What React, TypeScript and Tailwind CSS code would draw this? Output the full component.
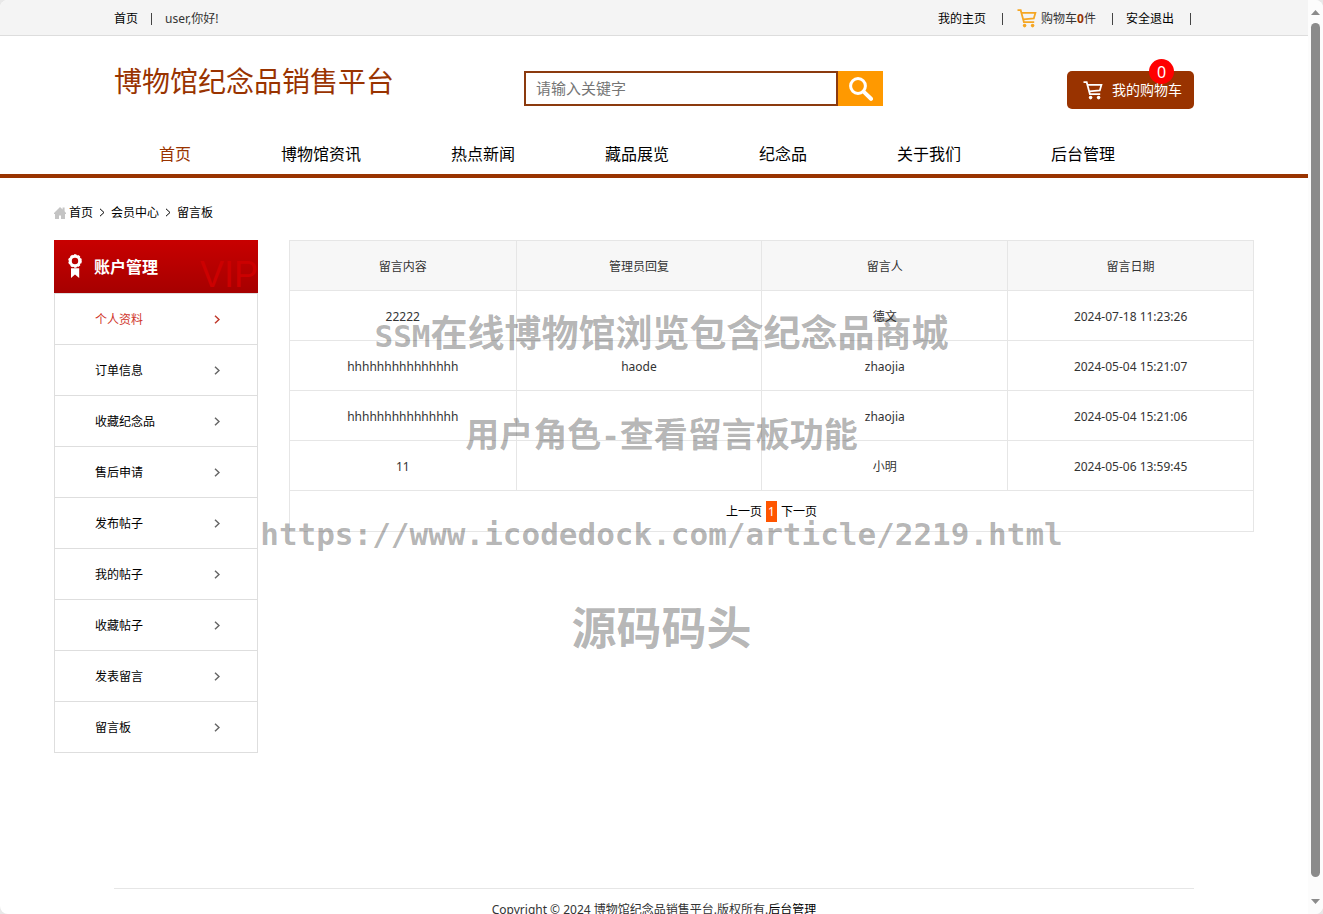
import { useState } from 'react';

const navItems = ['首页', '博物馆资讯', '热点新闻', '藏品展览', '纪念品', '关于我们', '后台管理'];

const sideItems = [
  '个人资料',
  '订单信息',
  '收藏纪念品',
  '售后申请',
  '发布帖子',
  '我的帖子',
  '收藏帖子',
  '发表留言',
  '留言板',
];

const messages = [
  { content: '22222', reply: '', user: '德文', date: '2024-07-18 11:23:26' },
  { content: 'hhhhhhhhhhhhhhh', reply: 'haode', user: 'zhaojia', date: '2024-05-04 15:21:07' },
  { content: 'hhhhhhhhhhhhhhh', reply: '', user: 'zhaojia', date: '2024-05-04 15:21:06' },
  { content: '11', reply: '', user: '小明', date: '2024-05-06 13:59:45' },
];

function CartIcon({ className }: { className?: string }) {
  return (
    <svg viewBox="0 0 20 19" fill="none" stroke="currentColor" strokeWidth="1.8" className={className} aria-hidden="true">
      <path d="M0.5 1.2h3.2l3.2 12h10.3" />
      <path d="M4.4 3.9h14l-1.6 5.6-10.6.8" />
      <circle cx="7.6" cy="16.6" r="1.8" fill="currentColor" stroke="none" />
      <circle cx="15.6" cy="16.6" r="1.8" fill="currentColor" stroke="none" />
    </svg>
  );
}

function Chevron({ className }: { className?: string }) {
  return (
    <svg viewBox="0 0 6 9" fill="none" stroke="currentColor" className={className} aria-hidden="true">
      <path d="M1 0.8l4 3.7-4 3.7" />
    </svg>
  );
}

function TopBar() {
  return (
    <div className="border-b border-[#ddd] bg-[#f4f4f4]">
      <div className="mx-auto flex h-[35px] max-w-[1080px] items-center justify-between pt-[2px]">
        <div className="flex items-center">
          <a href="#" className="text-black">首页</a>
          <span className="mx-[13px] h-3 w-px bg-[#444]" />
          <span>user,你好!</span>
        </div>
        <div className="flex items-center">
          <a href="#" className="text-black">我的主页</a>
          <span className="ml-4 mr-[14px] h-3 w-px bg-[#444]" />
          <a href="#" className="flex items-center">
            <CartIcon className="mr-1 h-[19px] w-5 text-[#f5a623]" />
            <span>购物车<b className="text-[#993300]">0</b>件</span>
          </a>
          <span className="ml-4 mr-[13px] h-3 w-px bg-[#444]" />
          <a href="#" className="text-black">安全退出</a>
          <span className="ml-4 mr-[3px] h-3 w-px bg-[#444]" />
        </div>
      </div>
    </div>
  );
}

function Header() {
  const [keyword, setKeyword] = useState('');

  return (
    <header className="border-b-4 border-[#993300]">
      <div className="mx-auto flex h-[98px] max-w-[1080px] items-start justify-between pt-[35px]">
        <h1 className="w-[410px] text-[28px] leading-5 text-[#993300]">博物馆纪念品销售平台</h1>
        <form className="mr-auto flex h-[35px]" onSubmit={(e) => e.preventDefault()}>
          <input
            type="text"
            aria-label="请输入关键字"
            placeholder="请输入关键字"
            value={keyword}
            onChange={(e) => setKeyword(e.target.value)}
            className="w-[314px] border-2 border-[#8b3a0e] bg-white px-[10px] pb-[2px] text-[15px] outline-none placeholder:text-[#757575]"
          />
          <button type="submit" aria-label="搜索" className="flex w-[45px] items-center justify-center bg-[#ff9900]">
            <svg viewBox="0 0 24 24" fill="none" stroke="#fff" className="size-6" aria-hidden="true">
              <circle cx="9" cy="9" r="7.4" strokeWidth="3" />
              <path d="M14.6 14.6l7.4 7.2" strokeWidth="4" strokeLinecap="round" />
            </svg>
          </button>
        </form>
        <a href="#" className="relative flex h-[38px] w-[127px] items-center rounded-[5px] bg-[#993300] pl-4 text-sm text-white">
          <CartIcon className="mr-[9px] h-[19px] w-5" />
          我的购物车
          <span className="absolute -top-3 right-5 flex size-[25px] items-center justify-center rounded-full bg-[#ff0000] text-base">
            0
          </span>
        </a>
      </div>
      <nav className="mx-auto flex h-10 max-w-[1080px] text-base">
        {navItems.map((item, i) => (
          <a key={item} href="#" className={`px-[45px] leading-[40px] ${i === 0 ? 'text-[#993300]' : 'text-black'}`}>
            {item}
          </a>
        ))}
      </nav>
    </header>
  );
}

function Sidebar() {
  return (
    <aside className="w-[204px] shrink-0">
      <div className="flex h-[53px] items-center overflow-hidden bg-gradient-to-b from-[#c80000] to-[#a60000] pl-[14px] text-white">
        <svg viewBox="0 0 14 25" className="h-[25px] w-[14px] shrink-0" fill="currentColor" aria-hidden="true">
          <circle cx="7" cy="7" r="4.7" fill="none" stroke="currentColor" strokeWidth="3" />
          <circle cx="7" cy="7" r="6" fill="none" stroke="currentColor" strokeWidth="1.6" strokeDasharray="2.4 1.4" />
          <path d="M3 14.2h8.2V24L7 20.4 3 24z" />
        </svg>
        <h2 className="ml-3 shrink-0 text-base font-bold">账户管理</h2>
        <span
          aria-hidden="true"
          className="ml-auto self-end font-['Liberation_Sans',sans-serif] text-[36px] leading-[36px] text-[#cc0000]"
        >
          VIP
        </span>
      </div>
      <ul className="border border-b-0 border-[#dedede]">
        {sideItems.map((item, i) => (
          <li key={item} className="border-b border-[#dedede]">
            <a href="#" className={`flex h-[50px] items-center justify-between pl-10 pr-[37px] ${i === 0 ? 'text-[#d0352b]' : 'text-black'}`}>
              <span className="pt-[2px]">{item}</span>
              <Chevron className={`h-[9px] w-[6px] stroke-[1.5] ${i === 0 ? 'text-[#c0392b]' : 'text-[#666]'}`} />
            </a>
          </li>
        ))}
      </ul>
    </aside>
  );
}

function MessageTable() {
  return (
    <table className="w-full table-fixed border-collapse border border-[#e6e6e6] text-center">
      <thead>
        <tr className="h-[50px] bg-[#f7f7f7]">
          <th className="w-[23.5%] border border-[#e6e6e6] pt-[2px] font-normal">留言内容</th>
          <th className="border border-[#e6e6e6] pt-[2px] font-normal">管理员回复</th>
          <th className="border border-[#e6e6e6] pt-[2px] font-normal">留言人</th>
          <th className="border border-[#e6e6e6] pt-[2px] font-normal">留言日期</th>
        </tr>
      </thead>
      <tbody>
        {messages.map((m) => (
          <tr key={m.date} className="h-[50px]">
            <td className="border border-[#e6e6e6] pt-[2px]">{m.content}</td>
            <td className="border border-[#e6e6e6] pt-[2px]">{m.reply}</td>
            <td className="border border-[#e6e6e6] pt-[2px]">{m.user}</td>
            <td className="border border-[#e6e6e6] pt-[2px]">{m.date}</td>
          </tr>
        ))}
        <tr className="h-[41px]">
          <td colSpan={4}>
            <div className="flex items-center justify-center gap-1">
              <a href="#" className="pt-[2px] text-black">上一页</a>
              <span className="bg-[#ff5500] px-[2px] leading-[21px] text-white">1</span>
              <a href="#" className="pt-[2px] text-black">下一页</a>
            </div>
          </td>
        </tr>
      </tbody>
    </table>
  );
}

function ScrollBar() {
  return (
    <div className="flex w-[15px] shrink-0 flex-col items-center bg-[#fcfcfc] py-[10px]" aria-hidden="true">
      <svg viewBox="0 0 9 5" className="h-[5px] w-[9px]" fill="#8b8b8b">
        <path d="M4.5 0L9 5H0z" />
      </svg>
      <div className="mb-[22px] mt-2 w-[9px] flex-1 rounded-full bg-[#8b8b8b]" />
      <svg viewBox="0 0 9 5" className="h-[5px] w-[9px]" fill="#8b8b8b">
        <path d="M4.5 5L0 0h9z" />
      </svg>
    </div>
  );
}

function Watermark() {
  return (
    <div className="pointer-events-none absolute inset-x-0 top-[284px] text-center font-bold text-black/30">
      <p className="text-[37px] leading-[98px]">
        <span className="font-['DejaVu_Sans_Mono',monospace] text-[31px]">SSM</span>在线博物馆浏览包含纪念品商城
      </p>
      <p className="text-[34px] leading-[98px]">
        用户角色<span className="font-['DejaVu_Sans_Mono',monospace] text-[31px]">-</span>查看留言板功能
      </p>
      <p className="font-['DejaVu_Sans_Mono',monospace] text-[31px] leading-[98px]">
        https://www.icodedock.com/article/2219.html
      </p>
      <p className="text-[45px] leading-[90px]">源码码头</p>
    </div>
  );
}

export default function App() {
  return (
    <div className="h-screen bg-[#e8e8e8] font-['Noto_Sans','Noto_Sans_CJK_SC',sans-serif] text-xs text-[#333]">
      <div className="relative flex h-full overflow-hidden rounded-lg bg-white">
        <div className="min-w-0 flex-1 overflow-hidden">
          <TopBar />
          <Header />

          <main className="mx-auto mb-[135px] max-w-[1200px]">
            {/* Breadcrumb */}
            <div className="flex h-[62px] items-center pt-[7px] text-black">
              <svg viewBox="0 0 12 12" className="mr-[3px] size-3" fill="#c4c4c4" aria-hidden="true">
                <path d="M6 0l2.6 2.4V.6h2v3.7L12 6v1h-1v5H7V8.4H5V12H1V7H0V6z" />
              </svg>
              <a href="#">首页</a>
              <Chevron className="mx-[6px] h-[9px] w-[6px]" />
              <a href="#">会员中心</a>
              <Chevron className="mx-[6px] h-[9px] w-[6px]" />
              <span>留言板</span>
            </div>

            <div className="flex items-start gap-[31px]">
              <Sidebar />
              <div className="min-w-0 flex-1">
                <MessageTable />
              </div>
            </div>
          </main>

          <footer className="mx-auto max-w-[1080px] border-t border-[#e6e6e6] pt-[13px] text-center leading-4">
            Copyright © 2024 博物馆纪念品销售平台.版权所有.<a href="#" className="text-black">后台管理</a>
          </footer>
        </div>
        <ScrollBar />
        <Watermark />
      </div>
    </div>
  );
}
